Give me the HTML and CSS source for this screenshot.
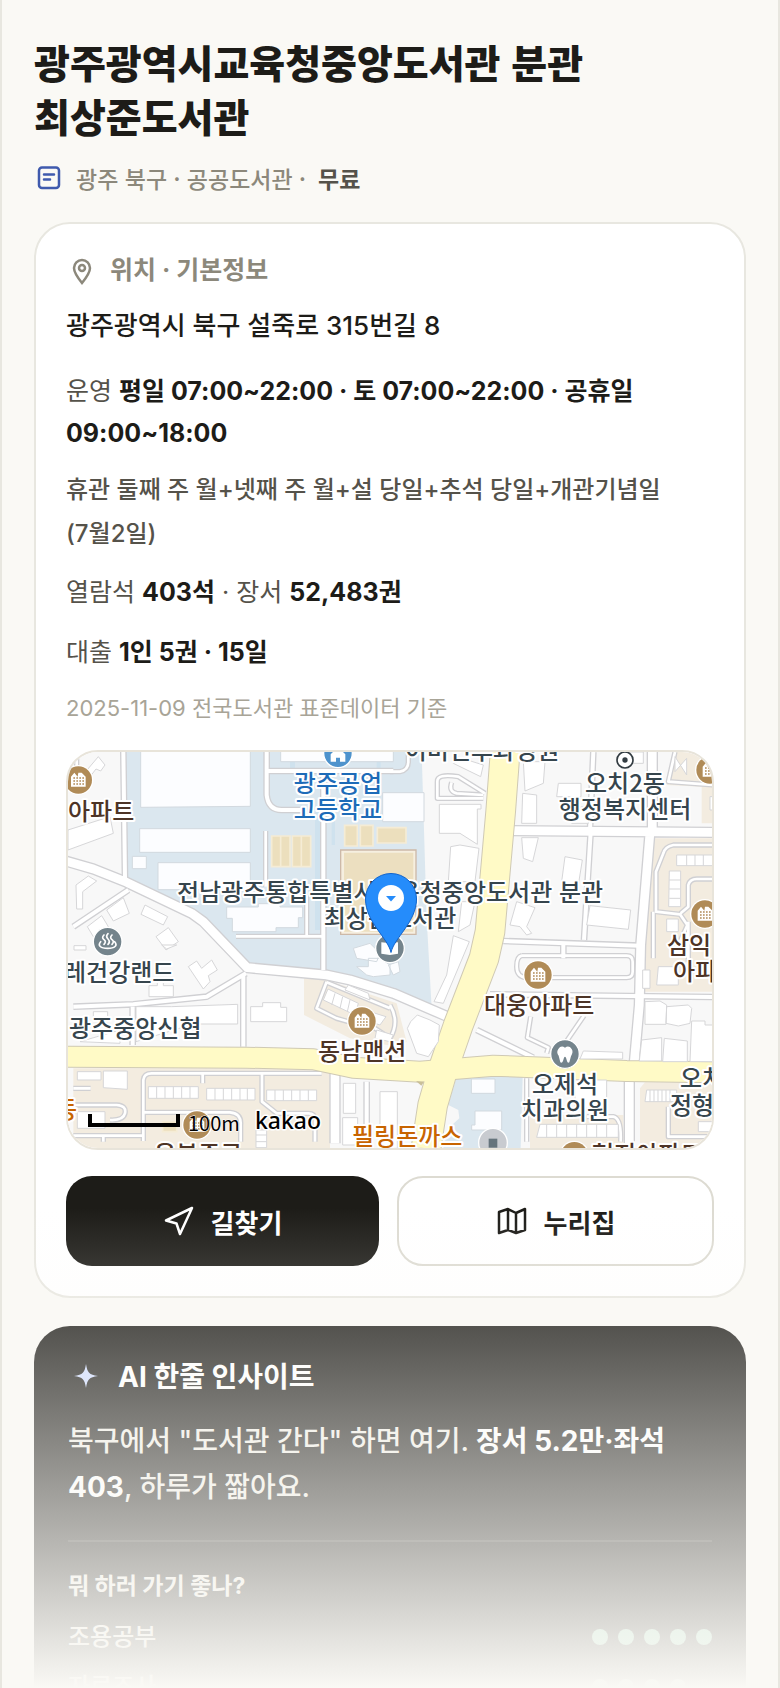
FILE: index.html
```html
<!DOCTYPE html>
<html lang="ko">
<head>
<meta charset="utf-8">
<meta name="viewport" content="width=device-width, initial-scale=1">
<title>광주광역시교육청중앙도서관 분관 최상준도서관</title>
<link rel="stylesheet" href="styles.css">
</head>
<body>
<main class="page">
  <header class="intro">
    <h1 class="intro-title">광주광역시교육청중앙도서관 분관<br>최상준도서관</h1>
    <p class="meta">
      <svg class="icon-doc" viewBox="0 0 30 30" stroke-width="2.5" aria-hidden="true"><rect x="5" y="4.500" width="20" height="20.500" rx="3"/><path d="M10 11.500h10M10 16.500h6"/></svg>
      <span class="meta-text">광주 북구 · 공공도서관 ·</span>
      <strong class="meta-fee">무료</strong>
    </p>
  </header>

  <section class="card">
    <h2 class="card-head">
      <svg class="icon-pin" viewBox="0 0 32 32" stroke-width="2.500" aria-hidden="true"><path d="M16 29C12 24 8 19 8 14a8 8 0 0 1 16 0C24 19 20 24 16 29z"/><circle cx="16" cy="14" r="3"/></svg>
      위치 · 기본정보
    </h2>
    <p class="address">광주광역시 북구 설죽로 315번길 8</p>
    <p class="hours">운영 <strong>평일 07:00~22:00 · 토 07:00~22:00 · 공휴일 09:00~18:00</strong></p>
    <p class="closed">휴관 둘째 주 월+넷째 주 월+설 당일+추석 당일+개관기념일<wbr><span class="keep">(7월2일)</span></p>
    <p class="seats">열람석 <strong>403석</strong> · 장서 <strong>52,483권</strong></p>
    <p class="loans">대출 <strong>1인 5권 · 15일</strong></p>
    <p class="source">2025-11-09 전국도서관 표준데이터 기준</p>

    <div class="map">
      <svg class="map-canvas" viewBox="0 0 644 396" preserveAspectRatio="xMidYMid slice" role="img" aria-label="도서관 주변 지도">
        <defs>
          <g id="lanes">
            <path d="M40 545L205 435M40 785L220 778 440 755 558 685M218 785V900M550 690V905M190 21L195 400"/>
            <path d="M1592 262L1572 585M1330 588L1740 602M1290 748L1960 756M1600 21L1590 255M920 1010V1190M1250 855L1420 938"/>
            <path d="M790 80V675M620 21V150Q625 195 665 195H730M625 78H1000M1510 600V640"/>
          </g>
          <g id="alleys">
            <path d="M617 258V425M740 450V570M528 574H788M1412 815L1402 878 1465 908 1460 925M1572 812L1520 888"/>
            <path d="M250 1188V1005Q252 985 275 985H785M428 985V1015M606 985V1070L650 1105H745Q765 1105 765 1125V1190M250 1102H510Q545 1105 542 1140V1190M40 1030H92M40 1080H170Q200 1082 195 1105 190 1127 150 1125M40 1172H250M130 1172V1190"/>
            <path d="M1960 300H1840Q1815 305 1810 325L1788 380V500L1860 508 1882 540 1860 590M1862 505L1885 485V420Q1890 402 1910 402H1960"/>
            <path d="M1275 145L1195 95Q1130 85 1132 110V160H1270M1270 150L1190 145Q1165 140 1175 112"/>
            <path d="M800 710L770 790 830 820 900 840M800 712L990 790M990 780Q1020 830 990 880L930 840"/>
            <path d="M1385 632H1700Q1718 632 1718 650V680Q1718 698 1700 698H1400Q1370 695 1370 665 1370 635 1385 632M1825 1085V1175H1960M1920 1100H1960M1580 1115H1660Q1685 1120 1682 1190M1400 1000V1190M1885 530V650"/>
            <path d="M24 75H50V21M990 80H1020Q1045 75 1045 50V21M1845 21L1825 110 1960 120M1780 500V640"/>
          </g>
          <g id="streets">
            <path d="M0 343L100 372 200 412 395 505 430 530 562 668 800 690 870 705 1000 745 1170 818"/>
            <path d="M1355 257L1970 262M1770 262L1742 600 1738 780 1722 960M1708 1000V1200M825 985V1195"/>
            <path d="M1777 21V250"/>
          </g>
          <g id="apartment">
            <circle r="45" fill="#fff"/><circle r="41" fill="#b08b57"/>
            <path d="M-22 20V-10L-12-22-2-10 0-22 10-22 22-10V20z" fill="#fff"/>
            <path d="M-15-6H18M-15 3H18M-15 12H18" stroke="#b08b57" stroke-width="4" stroke-dasharray="5 4"/>
          </g>
        </defs>

        <g transform="scale(.33333) translate(-24 -21)">
          <rect x="24" y="21" width="1932" height="1188" fill="#f8f8f8"/>
          <path fill="#dbe7ef" d="M190 21H1085L1100 520 1115 790 1000 745 800 690 565 665 400 515 200 410zM1190 995H1388L1382 1210H1150L1165 1150 1198 1120 1195 1095 1165 1080z"/>
          <path fill="#cfe2ee" d="M765 200H780V555H765zM815 200H825V300H815zM690 50H705V78H690zM950 50H962V78H950z"/>
          <path fill="#f3ece0" d="M40 970H790Q810 975 810 995V1210H40zM732 700L800 705 1010 775 1040 890 1010 905 870 880 732 810zM1775 280H1960V740H1745L1752 640zM1845 21H1960V235H1925V125L1820 120zM1755 1012H1960V1210H1740V1030zM1410 1110H1690V1210H1410z"/>
          <use href="#lanes" class="lane-edge"/><use href="#alleys" class="alley-edge"/><use href="#streets" class="street-edge"/>
          <use href="#lanes" class="lane"/><use href="#alleys" class="alley"/><use href="#streets" class="street"/>

          <path class="avenue-edge" d="M0 935L560 938 760 943 880 968 1080 980 1300 962 1700 978 1970 982"/>
          <path class="boulevard-edge" d="M1337 0L1322 200 1290 560 1272 640 1195 840 1150 970 1118 1080 1098 1210"/>
          <path class="avenue" d="M0 935L560 938 760 943 880 968 1080 980 1300 962 1700 978 1970 982"/>
          <path class="boulevard" d="M1337 0L1322 200 1290 560 1272 640 1195 840 1150 970 1118 1080 1098 1210"/>
          <path d="M1068 1008L1092 1010 1084 1022z" fill="#c9bf98"/>

          <g class="block">
            <path d="M242 15H571V184L242 187zM239 251H571V322H239zM217 334H259V371H217zM294 353H571V434H294zM662 10H1000V50H662zM968 143H1092V230H968z"/>
            <path d="M500 486H595V476H660V486H728V518H715V548H648V560H517V520H500zM880 610L930 595 960 625 950 650 890 640zM890 665H925V640H960L990 660V690L940 695 920 690zM985 660L1015 650 1020 680 1000 690z"/>
            <path d="M1234 1002H1305V1045H1234zM1245 1098H1325V1155H1235V1140H1245z"/>
          </g>
          <g class="house">
            <path d="M60 100L115 35 135 60 122 78 108 72 75 115zM24 255L150 215 160 265 24 315zM48 420L85 393 110 408 68 440V492H50zM140 495L190 458 208 505 160 528zM82 545L125 512 145 545 100 575zM255 480L323 515 310 540 243 508zM288 575L325 548 355 590 318 615zM42 602H78V615H42z"/>
            <path d="M385 665L410 648 425 670 455 645 472 675 445 692 450 710 430 732zM305 600H350L320 612zM267 722H292V712H310V722H340V755H267zM228 785H335L533 778V837H400L228 890zM572 785H608V773H662V787H680V830H572zM100 800H143V830H100zM60 890L180 855V895z"/>
            <path d="M52 980H123V1005H52zM130 978H202V1033L130 1028zM52 1100H135V1150H52zM850 1015H887V1105H850zM848 1118H893V1200H848zM960 1040H1012V1210H960z"/>
            <path d="M1138 178H1263V192H1252V298L1200 265H1138zM1172 305L1200 300 1257 310 1245 410H1165zM1190 35L1270 60 1262 95 1180 55zM1390 50H1455L1450 115 1395 138zM1388 145L1430 150V235H1385zM1495 115H1563V155H1490zM1545 190L1590 180 1585 235H1535zM1385 278H1435L1418 350 1390 340zM1515 335L1567 345 1555 420 1505 410zM1370 470L1425 488 1400 545 1415 565 1400 570 1380 545 1350 540zM1590 482L1712 495 1705 553 1580 540z"/>
            <path d="M1205 470H1245L1230 540 1195 560zM1180 572L1228 590 1150 775 1122 770 1160 690zM1072 810L1110 825 1138 840 1135 890 1105 935 1070 925 1042 850 1052 830zM1795 665H1855V720H1790zM1748 675H1770V730H1748zM1820 522H1855V560H1820z"/>
            <path d="M1755 770L1800 768 1820 780 1818 838H1755zM1820 785L1885 780 1895 790 1890 835 1855 843 1818 835zM1895 828H1935V840H1965V950H1890zM1745 885L1805 878V948H1738zM1813 880L1882 888V950H1808zM1570 918L1688 922V942H1560zM1545 1005H1640V1090H1545zM1915 1130H1960V1160H1915z"/>
            <path d="M1850 330H1960V362H1850zM1880 330V362M1905 330V362M1930 330V362M1828 378H1862V485H1826zM1828 405H1862M1828 432H1860M1828 460H1860M1845 35L1880 90V40L1845 80zM1710 21H1750V55H1710zM1950 155H1960V195H1950z"/>
            <path d="M265 425H415V460H265zM290 425V460M315 425V460M340 425V460M365 425V460M390 425V460" transform="translate(0 600)"/>
            <path d="M440 430H585V465H440zM465 430V465M490 430V465M515 430V465M540 430V465M562 430V465M620 435H770V467H620zM645 435V467M670 435V467M695 435V467M720 435V467M745 435V467" transform="translate(0 600)"/>
            <path d="M588 1155H620V1208H588zM588 1170H620M588 1190H620M804 732L895 775 885 810 790 765zM825 745L815 780M848 755L840 790M870 765L862 800M865 720L925 745 930 765 855 735zM930 800L978 815 960 840 930 830zM950 855L1000 870 990 890 945 880z"/>
            <path d="M1440 1138H1675V1177H1430zM1460 1138V1177M1490 1138V1177M1520 1138V1177M1550 1138V1177M1580 1138V1177M1610 1138V1177M1640 1138V1177M1760 1035H1850V1070H1755zM1770 1035V1070M1782 1035V1070M1794 1035V1070M1806 1035V1070M1818 1035V1070M1830 1035V1070"/>
          </g>
          <g fill="#ecdfbd" stroke="#f5ecd5" stroke-width="5">
            <path d="M635 273H690V365H635zM697 273H752V365H697zM662 273V365M724 273V365M854 241H892V303H854zM901 241H939V303H901zM952 248H1038V294H952z"/>
            <path d="M308 1130H350V1160H308z"/>
          </g>
          <path d="M842 315H1068V568H842z" fill="#f6efe0" stroke="#cdb9a8" stroke-width="4"/>
          <path d="M852 323H1060V560H852z" fill="#ecdfc0"/>

          <use href="#apartment" x="55" y="105"/><use href="#apartment" x="1950" y="75"/>
          <use href="#apartment" x="1935" y="507"/><use href="#apartment" x="1434" y="690"/>
          <use href="#apartment" x="906" y="828"/><use href="#apartment" x="411" y="1140"/>
          <use href="#apartment" x="1543" y="1232"/>
          <g fill="#74848c" stroke="#fff" stroke-width="4">
            <circle cx="143" cy="590" r="43"/><circle cx="1515" cy="927" r="43"/><circle cx="990" cy="610" r="43"/>
            <circle cx="1299" cy="1193" r="43" fill="#c8cbd0"/><circle cx="834" cy="25" r="43" fill="#4e93cd"/>
          </g>
          <path d="M132 570q-8 8 0 14t0 14M144 566q-8 8 0 16t0 16M156 570q-8 8 0 14t0 14M122 590c-10 12 0 20 21 20s31-8 21-20" fill="none" stroke="#fff" stroke-width="5" stroke-linecap="round"/>
          <path d="M1495 912q8-12 20-4 12-8 20 4 6 8-2 22l-5 18q-5 4-7-4l-3-10q-3-6-6 0l-3 10q-3 8-8 4l-5-20q-8-10-1-20z" fill="#fff"/>
          <path d="M964 592l22 2 4 4 4-4 20-2v34l-24 4-26-4z" fill="#fff"/>
          <path d="M1286 1181h26v27h-26z" fill="#65747c"/>
          <path d="M812 50V28l12-12h20l12 12v22h-16V38h-12v12z" fill="#fff"/>
          <circle cx="1695" cy="45" r="24" fill="#fff" stroke="#333c42" stroke-width="5"/><circle cx="1695" cy="45" r="8" fill="#333c42"/>
        </g>

        <g class="place" text-anchor="middle">
          <text x="414" y="7">이비인후과병원</text>
          <text x="557" y="40">오치2동</text><text x="557" y="66">행정복지센터</text>
          <text x="322" y="149">전남광주통합특별시교육청중앙도서관 분관</text><text x="322" y="175">최상준도서관</text>
          <text x="497" y="341">오제석</text><text x="497" y="367">치과의원</text>
        </g>
        <g class="place"><text x="-4" y="229">레건강랜드</text><text x="1" y="285">광주중앙신협</text><text x="612" y="335">오치</text><text x="602" y="362">정형외과</text></g>
        <g class="place school" text-anchor="middle"><text x="270" y="40">광주공업</text><text x="270" y="66">고등학교</text></g>
        <g class="place home"><text x="0" y="68">아파트</text><text x="250" y="308">동남맨션</text><text x="416" y="262">대웅아파트</text><text x="599" y="202">삼익</text><text x="605" y="228">아파트</text><text x="86" y="411">운봉주공</text><text x="524" y="411">현지아파트</text></g>
        <g class="place food"><text x="284" y="393">필링돈까스</text><text x="-13" y="366">동</text></g>

        <path d="M22 162V173H110V162" fill="none" stroke="#000" stroke-width="4" transform="translate(0 200)"/>
        <text class="scale" x="120" y="379">100m</text>
        <text class="brand" x="187" y="377">kakao</text>

        <path d="M323 200.500C320 186 297.500 170 297.500 147a25.500 25.500 0 0 1 51 0C348.500 170 326 186 323 200.500z" fill="#258cfb" stroke="#1264cc" stroke-width="1"/>
        <circle cx="323" cy="146" r="13" fill="#fff"/><path d="M318 144H328L323 149.500z" fill="#258cfb"/>
      </svg>
    </div>

    <div class="actions">
      <a class="btn btn-dark" href="#route"><svg class="btn-icon" viewBox="0 0 32 32" stroke-width="2.500" aria-hidden="true"><path d="M29 3L3 15.500 13.500 18.500 17 29z"/></svg>길찾기</a>
      <a class="btn btn-light" href="#homepage"><svg class="btn-icon" viewBox="0 0 32 32" stroke-width="2.500" aria-hidden="true"><path d="M3 7L12 4 20 8 29 4V25L20 28 12 25 3 28zM12 4V25M20 8V28"/></svg>누리집</a>
    </div>
  </section>

  <section class="insight">
    <h2 class="insight-head"><svg class="icon-spark" viewBox="0 0 36 34" aria-hidden="true"><path d="M18 4C19.500 13 21 14.500 30 16 21 17.500 19.500 19 18 28 16.500 19 15 17.500 6 16 15 14.500 16.500 13 18 4z"/></svg>AI 한줄 인사이트</h2>
    <p class="insight-text">북구에서 "도서관 간다" 하면 여기. <strong>장서 5.2만·좌석 403</strong>, 하루가 짧아요.</p>
    <div class="ratings">
      <h3 class="ratings-title">뭐 하러 가기 좋나?</h3>
      <div class="rating"><span>조용공부</span><span class="dots"><i class="dot"></i><i class="dot"></i><i class="dot"></i><i class="dot"></i><i class="dot"></i></span></div>
      <div class="rating"><span>자료조사</span><span class="dots"><i class="dot"></i><i class="dot"></i><i class="dot"></i><i class="dot"></i><i class="dot dot-off"></i></span></div>
    </div>
  </section>
  <div class="fade"></div>
</main>
</body>
</html>
```
FILE: styles.css
```css
* { box-sizing: border-box; }

body {
  margin: 0;
  background: #faf9f5;
  color: #1d1c18;
  font-family: Inter, "Noto Sans CJK KR", sans-serif;
  font-size: 25px;
}

h1, h2, h3, p { margin: 0; }

.page {
  position: relative;
  height: 100vh;
  overflow: hidden;
  padding: 34px 32px 0;
  border: solid #e8e7e0;
  border-width: 0 2px;
}

.intro-title {
  font-size: 39px;
  font-weight: 800;
  line-height: 54px;
  font-family: "Noto Sans CJK KR", sans-serif;
}

.meta {
  display: flex;
  align-items: center;
  margin-top: 20px;
  font-family: "Noto Sans CJK KR", sans-serif;
  font-size: 23px;
  line-height: 32px;
  color: #8c887b;
}

.icon-doc {
  width: 30px;
  height: 30px;
  margin-right: 12px;
  fill: none;
  stroke: #3f5aad;
  stroke-linecap: round;
}

.meta-text { font-weight: 500; }
.meta-fee { margin-left: 12px; color: #55524a; }

.card {
  margin-top: 28px;
  padding: 30px;
  border: 2px solid #e8e7e0;
  border-radius: 36px;
  background: #fff;
}

.card-head {
  display: flex;
  align-items: center;
  gap: 12px;
  margin-bottom: 20px;
  font-size: 25px;
  line-height: 30px;
  color: #8c887b;
}

.icon-pin {
  width: 32px;
  height: 32px;
  fill: none;
  stroke: #8c887b;
}

.address {
  margin-bottom: 24px;
  font-size: 26px;
  font-weight: 500;
  line-height: 40px;
}

.hours, .closed, .seats, .loans { color: #55524a; line-height: 44px; }
.hours strong, .seats strong, .loans strong { color: #1d1c18; }
.hours { margin-bottom: 14px; line-height: 42px; }
.closed { margin-bottom: 14px; font-size: 24px; font-weight: 500; }
.keep { white-space: nowrap; }
.seats { margin-bottom: 16px; }
.loans { margin-bottom: 18px; }

.source {
  margin-bottom: 26px;
  font-size: 22px;
  line-height: 32px;
  color: #a8a497;
}

.map {
  overflow: hidden;
  margin-bottom: 26px;
  border: 2px solid #e8e4da;
  border-radius: 32px;
}

.map-canvas { display: block; width: 100%; height: 396px; }

.lane-edge, .alley-edge, .street-edge { fill: none; stroke: #d0d0d3; stroke-linejoin: round; }
.lane, .alley, .street { fill: none; stroke: #fff; stroke-linejoin: round; }
.lane-edge { stroke-width: 20px; }
.lane { stroke-width: 12px; }
.alley-edge { stroke-width: 16px; }
.alley { stroke-width: 8px; }
.street-edge { stroke-width: 34px; }
.street { stroke-width: 26px; }
.avenue-edge, .boulevard-edge { fill: none; stroke: #cfc9b4; stroke-linejoin: round; }
.avenue, .boulevard { fill: none; stroke: #fffac6; stroke-linejoin: round; }
.avenue-edge { stroke-width: 66px; }
.avenue { stroke-width: 60px; }
.boulevard-edge { stroke-width: 92px; }
.boulevard { stroke-width: 86px; }
.block { fill: #fcfdff; stroke: #d2d9df; stroke-width: 3px; }
.house { fill: #fff; stroke: #d6d6d8; stroke-width: 3px; }

.place, .scale, .brand { paint-order: stroke; stroke: #fff; stroke-linejoin: round; }
.place {
  font-family: "Noto Sans CJK KR", sans-serif;
  font-size: 24px;
  font-weight: 500;
  stroke-width: 4px;
  fill: #36454d;
}
.school { fill: #1d6bb8; }
.home { fill: #4d3426; }
.food { fill: #c86400; }
.scale { font-family: "Noto Sans CJK KR", sans-serif; font-size: 20px; font-weight: 400; stroke-width: 1px; fill: #000; }
.brand { font-family: "Noto Sans", sans-serif; font-size: 23px; font-weight: 500; stroke-width: 3px; fill: #000; }

.actions { display: flex; gap: 18px; }

.btn {
  display: flex;
  flex: 1;
  align-items: center;
  justify-content: center;
  gap: 16px;
  height: 90px;
  border-radius: 26px;
  font-family: "Noto Sans CJK KR", sans-serif;
  font-size: 26px;
  font-weight: 700;
  text-decoration: none;
}

.btn-dark { background: #1d1c18; color: #fff; }
.btn-light { border: 2px solid #dddbd2; background: #fff; color: #1d1c18; }

.btn-icon {
  width: 32px;
  height: 32px;
  fill: none;
  stroke: currentColor;
  stroke-linejoin: round;
}

.insight {
  margin-top: 28px;
  padding: 34px;
  border-radius: 36px;
  background: #1d1c18;
  color: #f0eee6;
}

.insight-head {
  display: flex;
  align-items: center;
  gap: 14px;
  font-size: 28px;
  line-height: 34px;
  color: #fff;
}

.icon-spark { width: 36px; height: 34px; fill: #cfdcff; }

.insight-text {
  margin-top: 24px;
  font-size: 28px;
  font-weight: 500;
  line-height: 46px;
}
.insight-text strong { color: #fff; }

.ratings {
  margin-top: 30px;
  padding-top: 28px;
  border-top: 2px solid #3a3934;
}

.ratings-title {
  margin-bottom: 10px;
  font-size: 23px;
  line-height: 32px;
}

.rating {
  display: flex;
  align-items: center;
  justify-content: space-between;
  height: 50px;
  font-size: 24px;
  font-weight: 500;
  line-height: 32px;
}

.dots { display: flex; gap: 10px; }
.dot { width: 16px; height: 16px; border-radius: 50%; background: #8fd6b4; }
.dot-off { background: #3a3934; }

.fade {
  position: absolute;
  right: 0;
  bottom: 0;
  left: 0;
  height: 480px;
  background: linear-gradient(rgba(250, 249, 245, 0), #faf9f5);
  pointer-events: none;
}
```
